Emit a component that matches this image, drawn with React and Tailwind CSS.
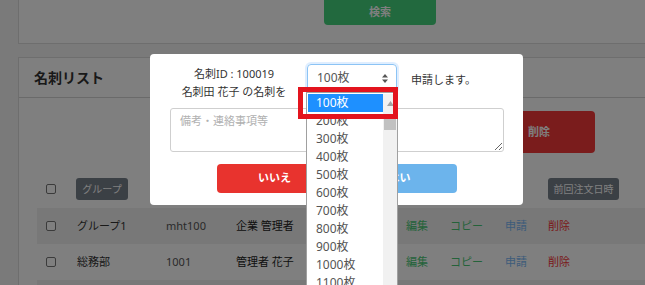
import React from 'react';

// Card list page dimmed behind a confirm modal with an open size dropdown
const rows = [
  { group: 'グループ1', code: 'mht100', name: '企業 管理者', striped: true },
  { group: '総務部', code: '1001', name: '管理者 花子', striped: false },
  { group: '', code: '', name: '', striped: true },
];

const sizes = ['100枚', '200枚', '300枚', '400枚', '500枚', '600枚', '700枚', '800枚', '900枚', '1000枚', '1100枚'];

const cols = 'grid grid-cols-[40px_89px_70px_170px_44px_55px_43px_1fr] items-center';

const Check = () => <div className="w-[10px] h-[10px] border border-[#777] rounded-[2px] bg-white ml-[9px]"></div>;

const Page = () => (
  <div className="pl-[18px] bg-[#f5f5f5] h-full">
    <div className="w-[660px] h-[44px] bg-white border-l border-b border-[#dcdcdc] flex">
      <div className="ml-[305px] w-[112px] h-[25px] bg-[#44d27c] rounded-b-[4px] flex items-center justify-center text-white text-[11px] font-bold">
        検索
      </div>
    </div>

    <div className="mt-[13px] w-[660px] h-[240px] bg-white border-l border-t border-[#dcdcdc]">
      <div className="h-[40px] border-b border-[#d4d4d4] flex items-center pl-[15px] text-[14px] font-bold text-[#333]">
        名刺リスト
      </div>
      <div className="pt-[13px] flex">
        <div className="ml-[464px] w-[112px] h-[42px] bg-[#f43838] rounded-[4px] flex items-center justify-center text-white text-[11px] font-bold">
          削除
        </div>
      </div>
      <div className={`${cols} mt-[25px] ml-[18px] h-[22px]`}>
        <Check />
        <div className="w-[52px] h-[22px] bg-[#76808a] rounded-[3px] text-white text-[10px] flex items-center justify-center -ml-px">
          グループ
        </div>
        <div></div>
        <div></div>
        <div></div>
        <div></div>
        <div></div>
        <div className="w-[71px] h-[22px] bg-[#76808a] rounded-[3px] text-white text-[10px] flex items-center justify-center">
          前回注文日時
        </div>
      </div>
      <div className="mt-[8px] ml-[18px]">
        {rows.map((r, i) => (
          <div key={i} className={`${cols} h-[36px] text-[11px] ${r.striped ? 'bg-[#f0f0f0]' : 'bg-white'}`}>
            <Check />
            <div className="text-[#333]">{r.group}</div>
            <div className="text-[#555]">{r.code}</div>
            <div className="text-[#222]">{r.name}</div>
            <div className="text-[#48c774]">{r.group && '編集'}</div>
            <div className="text-[#48c774]">{r.group && 'コピー'}</div>
            <div className="text-[#7ab8f5]">{r.group && '申請'}</div>
            <div className="text-[#f43434]">{r.group && '削除'}</div>
          </div>
        ))}
      </div>
    </div>
  </div>
);

const Modal = () => (
  <div className="absolute left-[150px] top-[54px] w-[373px] h-[151px] bg-white rounded-[4px] pt-[10px] text-[11px] text-[#333]">
    <div className="flex items-start">
      <div className="ml-[25px] w-[118px] text-center leading-[18px] pt-px">
        <div>名刺ID : 100019</div>
        <div>名刺田 花子 の名刺を</div>
      </div>
      <div className="ml-[14px] w-[90px] h-[28px] border border-[#8cc4f5] rounded-[4px] shadow-[0_0_0_2px_rgba(128,189,255,0.25)] flex items-center pl-[9px] pr-[8px] text-[12px] text-[#555]">
        <span className="flex-1">100枚</span>
        <svg width="6" height="9" viewBox="0 0 6 9">
          <path d="M3 0 L6 3.5 L0 3.5 Z M3 9 L6 5.5 L0 5.5 Z" fill="#555" />
        </svg>
      </div>
      <div className="ml-[14px] h-[28px] flex items-center pt-[4px] text-[11px]">申請します。</div>
    </div>
    <textarea
      className="block mt-[7px] ml-[20px] w-[334px] h-[44px] border border-[#cfcfcf] rounded-[3px] px-[9px] py-[4px] text-[11px] placeholder:text-[#b0b0b0] outline-none"
      placeholder="備考・連絡事項等"
    ></textarea>
    <div className="flex gap-[10px] mt-[12px] ml-[67px]">
      <div className="w-[115px] h-[29px] bg-[#e8332e] rounded-[4px] text-white font-bold flex items-center justify-center">いいえ</div>
      <div className="w-[115px] h-[29px] bg-[#6cb4ec] rounded-[4px] text-white font-bold flex items-center justify-center">はい</div>
    </div>
  </div>
);

const Dropdown = () => (
  <>
    <div className="absolute left-[306px] top-[92px] w-[92px] h-[200px] bg-white border border-[#a0a0a0] flex pt-px pl-px">
      <div className="flex-1 text-[12px] text-[#555]">
        {sizes.map((s, i) => (
          <div key={s} className={`h-[18px] pl-[8px] flex items-center ${i === 0 ? 'bg-[#1e90ff] text-white' : ''}`}>
            {s}
          </div>
        ))}
      </div>
      <div className="w-[14px] bg-[#f1f1f1] flex flex-col items-center">
        <div className="h-[18px] flex items-center justify-center">
          <svg width="7" height="5" viewBox="0 0 7 5">
            <path d="M3.5 0 L7 5 L0 5 Z" fill="#a3a3a3" />
          </svg>
        </div>
        <div className="mt-[6px] w-[12px] h-[12px] bg-[#c1c1c1]"></div>
      </div>
    </div>
    <div className="absolute left-[298px] top-[87px] w-[100px] h-[32px] border-[5px] border-[#e3141e]"></div>
  </>
);

export default function App() {
  return (
    <div
      className="relative w-[645px] h-[285px] overflow-hidden"
      style={{ fontFamily: '"Noto Sans", "Noto Sans CJK JP", sans-serif' }}
    >
      <Page />
      <div className="absolute inset-0 bg-black/50"></div>
      <Modal />
      <Dropdown />
    </div>
  );
}
